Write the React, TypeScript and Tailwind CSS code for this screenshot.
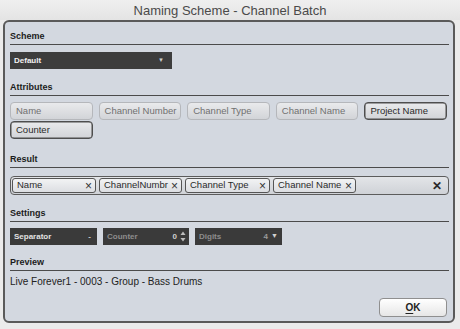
const attributes = [
  { label: "Name", active: false },
  { label: "Channel Number", active: false },
  { label: "Channel Type", active: false },
  { label: "Channel Name", active: false },
  { label: "Project Name", active: true },
  { label: "Counter", active: true },
];

const chips = [
  { label: "Name", w: "w-[84px]" },
  { label: "ChannelNumbr", w: "w-[83px]" },
  { label: "Channel Type", w: "w-[85px]" },
  { label: "Channel Name", w: "w-[83px]" },
];

function SectionHeader({ title, mt }: { title: string; mt: string }) {
  return (
    <div className={`${mt} border-b-[1.5px] border-[#4b4b4b] pb-[2px]`}>
      <div className="text-[9px] font-bold leading-[12px] text-[#1c1c1c]">{title}</div>
    </div>
  );
}

export default function App() {
  return (
    <div
      className="w-[460px] h-[329px] bg-[#ebebeb] flex flex-col overflow-hidden"
      style={{ fontFamily: '"Liberation Sans", Arial, sans-serif' }}
    >
      {/* Title bar */}
      <div className="h-[20px] flex items-center justify-center bg-gradient-to-b from-[#efefef] to-[#e4e4e4] text-[13px] text-[#4a4a4a] leading-none pt-[1px]">
        Naming Scheme - Channel Batch
      </div>

      {/* Panel */}
      <div className="ml-[3px] mr-[5px] h-[303px] border-2 border-[#5a5a5a] rounded-[6px] bg-[#d3d8e0] pl-[5px] pr-[4px] flex flex-col">
        <SectionHeader title="Scheme" mt="mt-[8px]" />

        <div className="mt-[7px] w-[162px] h-[17px] bg-[#3d3d3d] flex items-center justify-between px-[4px]">
          <span className="text-[8px] font-bold text-[#f2f2f2]">Default</span>
          <span className="text-[6px] text-[#d0d0d0] mr-[4px]">▼</span>
        </div>

        <SectionHeader title="Attributes" mt="mt-[12px]" />

        <div className="mt-[6px] w-[437px] grid grid-cols-5 gap-x-[6px] gap-y-[1px]">
          {attributes.map((a) => (
            <div
              key={a.label}
              className={`h-[18px] rounded-[4px] border bg-gradient-to-b from-[#e9eaec] to-[#d2d4d8] flex items-center pl-[5px] text-[9.5px] ${
                a.active
                  ? "border-[#4e4e4e] text-[#2a2a2a] shadow-[inset_0_0_0_0.5px_#4e4e4e]"
                  : "border-[#b5b7bb] text-[#707070]"
              }`}
            >
              {a.label}
            </div>
          ))}
        </div>

        <SectionHeader title="Result" mt="mt-[14px]" />

        <div className="mt-[8px] h-[19px] border-[1.5px] border-[#5c5c5c] rounded-[4px] bg-gradient-to-b from-[#e3e5e8] to-[#cfd2d7] flex items-center pl-[1px] pr-[6px]">
          {chips.map((c, i) => (
            <div
              key={c.label}
              className={`${c.w} ${i > 0 ? "ml-[3px]" : ""} h-[15px] rounded-[3px] border-[1.5px] border-[#555] bg-gradient-to-b from-[#f2f3f4] to-[#dcdee2] flex items-center justify-between pl-[4px] pr-[3px] text-[9.5px] text-[#2a2a2a]`}
            >
              <span>{c.label}</span>
              <span className="text-[12px] leading-none text-[#333]">×</span>
            </div>
          ))}
          <div className="flex-1" />
          <span className="text-[12px] font-bold text-[#2a2a2a] leading-none">✕</span>
        </div>

        <SectionHeader title="Settings" mt="mt-[12px]" />

        <div className="mt-[6px] flex gap-[6px]">
          <div className="w-[87px] h-[17px] bg-[#3a3a3a] flex items-center justify-between pl-[4px] pr-[6px]">
            <span className="text-[8px] font-bold text-[#e2e2e2]">Separator</span>
            <span className="text-[8px] font-bold text-[#cfcfcf]">-</span>
          </div>
          <div className="w-[86px] h-[17px] bg-[#3a3a3a] flex items-center justify-between pl-[4px] pr-[3px]">
            <span className="text-[8px] font-bold text-[#8d8d8d]">Counter</span>
            <span className="flex items-center gap-[3px]">
              <span className="text-[8px] font-bold text-[#cfcfcf]">0</span>
              <svg width="6" height="11" viewBox="0 0 6 11">
                <path d="M3 0.5 L5.5 4 L0.5 4 Z" fill="#bdbdbd" />
                <path d="M3 10.5 L5.5 7 L0.5 7 Z" fill="#bdbdbd" />
              </svg>
            </span>
          </div>
          <div className="w-[87px] h-[17px] bg-[#3a3a3a] flex items-center justify-between pl-[4px] pr-[4px]">
            <span className="text-[8px] font-bold text-[#8d8d8d]">Digits</span>
            <span className="flex items-center gap-[3px]">
              <span className="text-[8px] font-bold text-[#9a9a9a]">4</span>
              <span className="text-[7px] text-[#cfcfcf]">▼</span>
            </span>
          </div>
        </div>

        <SectionHeader title="Preview" mt="mt-[11px]" />

        <div className="mt-[5px] text-[10px] leading-[12px] text-[#222]">
          Live Forever1 - 0003 - Group - Bass Drums
        </div>

        <div className="mt-auto mb-[4px] self-end mr-[2px] w-[68px] h-[19px] rounded-[4px] border border-[#8f8f8f] bg-gradient-to-b from-[#ffffff] to-[#e6e6e6] flex items-center justify-center text-[10px] font-bold text-[#222]">
          <span>
            <span className="underline underline-offset-2">O</span>K
          </span>
        </div>
      </div>
    </div>
  );
}
